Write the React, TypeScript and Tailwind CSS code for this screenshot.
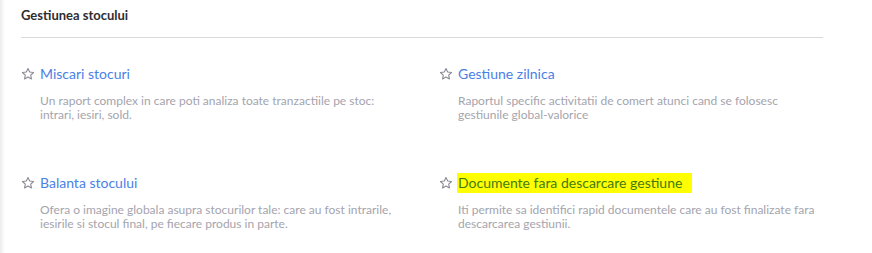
import React from "react";

const Star = () => (
  <svg width="14" height="14" viewBox="0 0 24 24" fill="none" stroke="#8a8a94" strokeWidth="1.9" strokeLinejoin="round" className="shrink-0">
    <polygon points="12,2.5 14.9,8.6 21.5,9.4 16.6,13.9 17.9,20.5 12,17.2 6.1,20.5 7.4,13.9 2.5,9.4 9.1,8.6" />
  </svg>
);

type Item = { title: string; desc: string; hl?: boolean };

const items: Item[] = [
  { title: "Miscari stocuri", desc: "Un raport complex in care poti analiza toate tranzactiile pe stoc: intrari, iesiri, sold." },
  { title: "Gestiune zilnica", desc: "Raportul specific activitatii de comert atunci cand se folosesc gestiunile global-valorice" },
  { title: "Balanta stocului", desc: "Ofera o imagine globala asupra stocurilor tale: care au fost intrarile, iesirile si stocul final, pe fiecare produs in parte." },
  { title: "Documente fara descarcare gestiune", desc: "Iti permite sa identifici rapid documentele care au fost finalizate fara descarcarea gestiunii.", hl: true },
];

export default function App() {
  return (
    <div className="w-[872px] h-[253px] bg-white relative overflow-hidden" style={{ fontFamily: "Lato, 'Open Sans', sans-serif" }}>
      <div className="absolute left-0 top-0 bottom-0 w-[5px] bg-gradient-to-r from-[#ececec] to-white" />
      <div className="pl-[21px] w-[823px]">
        <div className="pt-[6px] h-[38px] border-b border-[#d9d9d9] text-[13px] font-bold text-[#2d2d33] leading-[18px]">
          Gestiunea stocului
        </div>
        <div className="grid grid-cols-[418px_1fr] pt-[27px] gap-y-[52px]">
          {items.map((it) => (
            <div key={it.title} className="flex flex-col">
              <div className="flex items-center gap-[5px] h-[18px]">
                <Star />
                <span
                  className={
                    "text-[14px] leading-[18px] " +
                    (it.hl ? "bg-[#ffff00] text-[#437a12] py-[1px] pl-[1px] pr-[10px] -ml-[1px]" : "text-[#4a7fe6]")
                  }
                >
                  {it.title}
                </span>
              </div>
              <div className="pl-[19px] mt-[11px] max-w-[380px] text-[12px] leading-[14px] text-[#a4a4ae]">
                {it.desc}
              </div>
            </div>
          ))}
        </div>
      </div>
    </div>
  );
}
